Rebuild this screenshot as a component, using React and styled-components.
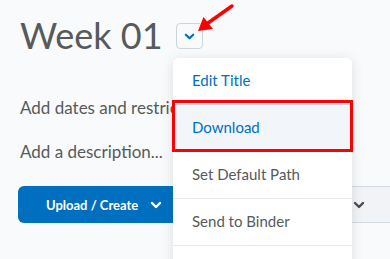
import React from "react";
import styled, { createGlobalStyle } from "styled-components";

const GlobalStyle = createGlobalStyle`
  body {
    margin: 0;
    background: #f9fafb;
    font-family: Lato, "Open Sans", sans-serif;
    overflow: hidden;
  }
`;

const Page = styled.div`
  position: relative;
  width: 390px;
  height: 259px;
  padding: 13px 0 0 20px;
  box-sizing: border-box;
  overflow: hidden;
`;

const TitleRow = styled.div`
  display: flex;
  align-items: center;
  gap: 13px;
`;

const Title = styled.h1`
  margin: 0;
  font-size: 36px;
  font-weight: 400;
  color: #565a5c;
  line-height: 44px;
`;

const ChevronButton = styled.div`
  width: 27px;
  height: 26px;
  box-sizing: border-box;
  border: 1px solid #cdd5dc;
  border-radius: 4px;
  background: #f9fafb;
  display: flex;
  align-items: center;
  justify-content: center;
  margin-top: 2px;
`;

const Line = styled.div`
  font-size: 17px;
  color: #565a5c;
  margin-top: ${(p) => p.top}px;
  line-height: 20px;
  white-space: nowrap;
`;

const Actions = styled.div`
  display: flex;
  gap: 12px;
  margin-top: 24px;
  margin-left: -2px;
`;

const PrimaryButton = styled.div`
  flex: none;
  width: 190px;
  height: 37px;
  border-radius: 6px;
  background: #006fbf;
  color: #fff;
  font-weight: 700;
  font-size: 13px;
  display: flex;
  align-items: center;
  padding-left: 28px;
  gap: 12px;
  box-sizing: border-box;
`;

const SecondaryButton = styled.div`
  flex: none;
  width: 180px;
  height: 37px;
  background: #f1f3f6;
  border-top: 1px solid #d3d9e3;
  border-bottom: 1px solid #d3d9e3;
  box-sizing: border-box;
  display: flex;
  align-items: center;
  justify-content: flex-end;
  padding-right: 35px;
`;

const Menu = styled.div`
  position: absolute;
  left: 173px;
  top: 58px;
  width: 179px;
  background: #fff;
  border-radius: 6px;
  box-shadow: 0 2px 12px rgba(86, 90, 92, 0.18);
  overflow: hidden;
`;

const MenuItem = styled.div`
  position: relative;
  height: ${(p) => (p.first ? 46 : 47)}px;
  box-sizing: border-box;
  padding: 0 0 3px 19px;
  display: flex;
  align-items: center;
  font-size: 15px;
  color: ${(p) => (p.blue ? "#006fbf" : "#565a5c")};
  background: ${(p) => (p.active ? "#f2f6fb" : "#fff")};
  border-top: 1px solid ${(p) => (p.first ? "transparent" : p.active ? "#c8d8ea" : "#e3e7ee")};
`;

const Highlight = styled.div`
  position: absolute;
  left: 172px;
  top: 100px;
  width: 181px;
  height: 52px;
  border: 3px solid #ff0000;
  box-sizing: border-box;
`;

const Arrow = styled.svg`
  position: absolute;
  left: 190px;
  top: 2px;
`;

const Chevron = ({ color, size = 12, weight = 2.4 }) => (
  <svg width={size} height={size} viewBox="0 0 12 12">
    <path d="M2 4l4 4 4-4" fill="none" stroke={color} strokeWidth={weight} strokeLinecap="round" strokeLinejoin="round" />
  </svg>
);

export default function App() {
  return (
    <Page>
      <GlobalStyle />
      <TitleRow>
        <Title>Week 01</Title>
        <ChevronButton>
          <Chevron color="#006fbf" size={11} />
        </ChevronButton>
      </TitleRow>
      <Line top={41}>Add dates and restrictions...</Line>
      <Line top={24}>Add a description...</Line>
      <Actions>
        <PrimaryButton>
          Upload / Create
          <Chevron color="#fff" />
        </PrimaryButton>
        <SecondaryButton>
          <Chevron color="#494c4e" />
        </SecondaryButton>
      </Actions>

      <Menu>
        <MenuItem first blue>Edit Title</MenuItem>
        <MenuItem active blue>Download</MenuItem>
        <MenuItem>Set Default Path</MenuItem>
        <MenuItem>Send to Binder</MenuItem>
        <MenuItem />
      </Menu>
      <Highlight />
      <Arrow width="50" height="36" viewBox="0 0 50 36">
        <path d="M42 4L18 21" stroke="#f00" strokeWidth="3.5" strokeLinecap="round" />
        <path d="M8 29l5.5-14 9.5 12z" fill="#f00" />
      </Arrow>
    </Page>
  );
}
